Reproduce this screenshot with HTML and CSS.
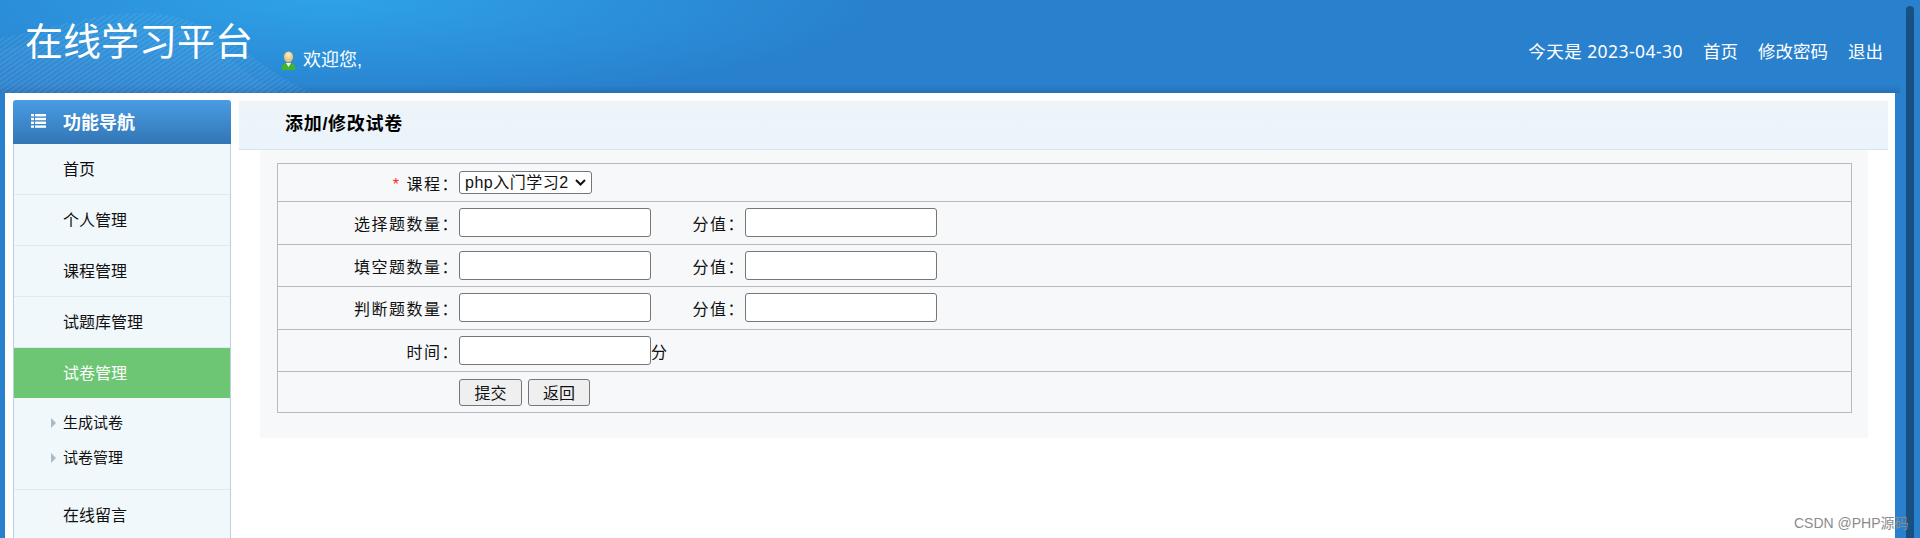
FILE: index.html
```html
<!DOCTYPE html>
<html lang="zh">
<head>
<meta charset="utf-8">
<title>在线学习平台</title>
<link rel="stylesheet" href="styles.css">
</head>
<body>
<header class="top">
  <svg class="waves" width="420" height="93" viewBox="0 0 420 93" aria-hidden="true">
    <defs>
      <pattern id="st" width="4" height="4" patternUnits="userSpaceOnUse" patternTransform="rotate(-35)">
        <rect width="4" height="2" fill="#fff" opacity=".08"/>
      </pattern>
    </defs>
    <path d="M0 38C50 30 100 8 160 14C225 22 260 72 312 93L0 93Z" fill="url(#st)"/>
    <path d="M0 50C60 40 115 22 170 28C215 36 245 78 280 93L0 93Z" fill="#fff" opacity=".03"/>
  </svg>
  <h1 class="logo">在线学习平台</h1>
  <div class="welcome">
    <svg class="user" width="15" height="19" viewBox="0 0 15 19" aria-hidden="true">
      <defs>
        <radialGradient id="hd" cx=".5" cy=".35" r=".7">
          <stop offset="0" stop-color="#fff6c8"/>
          <stop offset="1" stop-color="#d8a860"/>
        </radialGradient>
      </defs>
      <path d="M0.5 19C0.5 13.5 3 12 7.5 12C12 12 14.5 13.5 14.5 19Z" fill="#3fb52a"/>
      <path d="M5 12L7.5 16L10 12Z" fill="#fff"/>
      <ellipse cx="7.5" cy="6" rx="4.6" ry="5.6" fill="url(#hd)"/>
    </svg>
    <span>欢迎您,</span>
  </div>
  <nav class="toplinks">
    <span class="date">今天是 2023-04-30</span><a>首页</a><a>修改密码</a><a>退出</a>
  </nav>
</header>
<div class="frame">
  <aside class="side">
    <div class="side-head">
      <svg width="15" height="14" viewBox="0 0 15 14" aria-hidden="true" fill="#fff">
        <rect x="0" y="0" width="3" height="2.4"/><rect x="4" y="0" width="11" height="2.4"/>
        <rect x="0" y="3.8" width="3" height="2.4"/><rect x="4" y="3.8" width="11" height="2.4"/>
        <rect x="0" y="7.6" width="3" height="2.4"/><rect x="4" y="7.6" width="11" height="2.4"/>
        <rect x="0" y="11.4" width="3" height="2.4"/><rect x="4" y="11.4" width="11" height="2.4"/>
      </svg>
      <span>功能导航</span>
    </div>
    <ul class="menu">
      <li class="item">首页</li>
      <li class="item">个人管理</li>
      <li class="item">课程管理</li>
      <li class="item">试题库管理</li>
      <li class="item on">试卷管理</li>
      <li class="subs">
        <div class="sub">生成试卷</div>
        <div class="sub">试卷管理</div>
      </li>
      <li class="item">在线留言</li>
    </ul>
  </aside>
  <main class="main">
    <h2 class="title">添加/修改试卷</h2>
    <div class="panel">
      <form class="form">
        <div class="row r38">
          <label class="lab"><i class="req">*</i> 课程：</label>
          <select class="sel"><option>php入门学习2</option></select>
        </div>
        <div class="row r43">
          <label class="lab">选择题数量：</label><input class="inp" type="text">
          <label class="lab2">分值：</label><input class="inp" type="text">
        </div>
        <div class="row r42">
          <label class="lab">填空题数量：</label><input class="inp" type="text">
          <label class="lab2">分值：</label><input class="inp" type="text">
        </div>
        <div class="row r43">
          <label class="lab">判断题数量：</label><input class="inp" type="text">
          <label class="lab2">分值：</label><input class="inp" type="text">
        </div>
        <div class="row r42">
          <label class="lab">时间：</label><input class="inp" type="text"><span class="unit">分</span>
        </div>
        <div class="row r40">
          <span class="lab"></span>
          <button class="btn b1" type="button">提交</button>
          <button class="btn b2" type="button">返回</button>
        </div>
      </form>
    </div>
  </main>
</div>
<div class="thumb"></div>
<div class="mark">CSDN @PHP源码</div>
</body>
</html>
```
FILE: styles.css
```css
* { box-sizing: border-box; }
html, body { margin: 0; height: 538px; overflow: hidden; }
body {
  background: #2980cd;
  font-family: "Liberation Sans", "Noto Sans CJK SC", sans-serif;
  font-size: 16px;
  color: #111;
  position: relative;
}
.top {
  position: relative;
  width: 1900px;
  height: 93px;
  display: flex;
  align-items: flex-start;
  color: #fff;
  background:
    radial-gradient(ellipse 560px 105px at 330px 0, #2ea2e8 0%, rgba(46,162,232,0) 100%),
    linear-gradient(#2980cd 0, #2980cd 85px, #2670b4 93px);
}
.waves { position: absolute; left: 0; top: 0; }
.logo {
  position: relative;
  margin: 14px 0 0 25px;
  font-size: 38px;
  line-height: 56px;
  font-weight: 400;
}
.welcome {
  position: relative;
  display: flex;
  align-items: center;
  gap: 7px;
  margin: 49px 0 0 28px;
  font-size: 18px;
  line-height: 22px;
}
.toplinks {
  position: relative;
  margin: 39px 0 0 auto;
  padding-right: 17px;
  display: flex;
  gap: 20px;
  font-family: "Noto Sans", "Noto Sans CJK SC", sans-serif;
  font-size: 17.5px;
  line-height: 24px;
}
.date { letter-spacing: .45px; }
.frame {
  width: 1890px;
  height: 445px;
  margin-left: 5px;
  background: #fff;
  display: flex;
  align-items: flex-start;
  padding: 7px 7px 0 8px;
  gap: 8px;
}
.side { width: 218px; flex: none; }
.side-head {
  height: 44px;
  display: flex;
  align-items: center;
  gap: 17px;
  padding: 0 0 2px 18px;
  color: #fff;
  font-weight: 700;
  font-size: 18px;
  border-radius: 3px 3px 0 0;
  background: linear-gradient(#4a9ce3, #3276b5);
}
.menu {
  list-style: none;
  margin: 0;
  padding: 0;
  background: #f1f8fb;
  border-left: 1px solid #b9d0de;
  border-right: 1px solid #b9d0de;
}
.item {
  height: 51px;
  padding: 1px 0 0 49px;
  line-height: 50px;
  font-size: 16px;
  border-bottom: 1px solid #dfeaf1;
}
.item.on {
  background: #6dc673;
  color: #fff;
  height: 50px;
  border-bottom: 0;
}
.subs {
  height: 92px;
  padding-top: 7px;
  border-bottom: 1px solid #dfeaf1;
}
.sub {
  position: relative;
  height: 35px;
  line-height: 35px;
  padding-left: 49px;
  font-size: 15px;
}
.sub::before {
  content: "";
  position: absolute;
  left: 37px;
  top: 13px;
  border-left: 5px solid #a9bac6;
  border-top: 5px solid transparent;
  border-bottom: 5px solid transparent;
}
.main { flex: 1; min-width: 0; padding-top: 1px; }
.title {
  margin: 0;
  height: 49px;
  line-height: 46px;
  padding-left: 46px;
  font-size: 18px;
  font-weight: 700;
  letter-spacing: .7px;
  color: #000;
  background: linear-gradient(#eef4f8, #ebf4fc);
  border-bottom: 1px solid #dde3ea;
}
.panel {
  margin: 0 20px 0 21px;
  height: 288px;
  padding: 13px 16px 0 17px;
  background: #f7f8fa;
}
.form { border: 1px solid #b8babd; }
.row {
  display: flex;
  align-items: center;
  border-bottom: 1px solid #b8babd;
}
.row:last-child { border-bottom: 0; }
.r38 { height: 38px; }
.r43 { height: 43px; padding-bottom: 1px; }
.r42 { height: 42px; }
.r40 { height: 40px; }
.lab {
  width: 181px;
  text-align: right;
  letter-spacing: 1.5px;
  flex: none;
}
.lab2 { width: 94px; text-align: right; letter-spacing: 1.5px; flex: none; }
.req { color: #f22; font-style: normal; }
.sel {
  appearance: none;
  width: 133px;
  height: 23px;
  font: 16px "Liberation Sans", "Noto Sans CJK SC", sans-serif;
  letter-spacing: .5px;
  color: #111;
  border: 1px solid #767676;
  border-radius: 3px;
  padding: 0 0 0 5px;
  background: #fff url("data:image/svg+xml,%3Csvg xmlns='http://www.w3.org/2000/svg' width='11' height='7' viewBox='0 0 11 7'%3E%3Cpath d='M1 1l4.5 4.5L10 1' fill='none' stroke='%23111' stroke-width='2'/%3E%3C/svg%3E") no-repeat right 5px center;
}
.inp {
  width: 192px;
  height: 29px;
  background: #fff;
  border: 1px solid #767676;
  border-radius: 3px;
}
.btn {
  height: 27px;
  padding: 0;
  font: 16px "Liberation Sans", "Noto Sans CJK SC", sans-serif;
  color: #111;
  background: #efefef;
  border: 1px solid #767676;
  border-radius: 3px;
}
.b1 { width: 63px; margin-right: 6px; }
.b2 { width: 62px; }
.thumb {
  position: absolute;
  left: 1906px;
  top: 6px;
  width: 8px;
  height: 540px;
  background: #175081;
  border-radius: 4px 4px 0 0;
}
.mark {
  position: absolute;
  left: 1794px;
  top: 513px;
  font-size: 14px;
  line-height: 20px;
  color: #8b8b8b;
  white-space: nowrap;
}
```
